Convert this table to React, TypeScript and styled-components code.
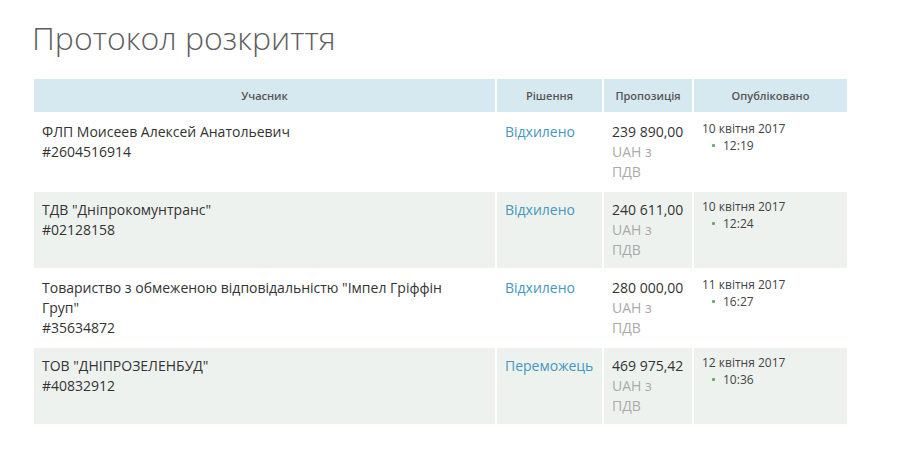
import React from "react";
import styled, { createGlobalStyle } from "styled-components";

const Global = createGlobalStyle`
  html, body { margin: 0; padding: 0; background: #fff; }
  body { font-family: "Open Sans", "Noto Sans", sans-serif; color: #333; }
`;

const Page = styled.div`
  padding: 14px 0 0 32px;
  width: 817px;
`;

const Title = styled.h1`
  margin: 0;
  font-family: "Open Sans", "Noto Sans", sans-serif;
  font-weight: 300;
  font-size: 32px;
  line-height: 48px;
  color: #5e5e5e;
`;

const Table = styled.table`
  margin-top: 15px;
  width: 817px;
  border-collapse: separate;
  border-spacing: 2px;
  table-layout: fixed;
`;

const HeadCell = styled.th<{ $w: number }>`
  width: ${(p) => p.$w}px;
  height: 33px;
  padding: 0;
  background: #d7e9f0;
  color: #555;
  font-size: 11px;
  font-weight: 600;
  text-align: center;
  vertical-align: middle;
`;

const Row = styled.tr<{ $alt: boolean }>`
  background: ${(p) => (p.$alt ? "#eef2ef" : "#fff")};
`;

const Cell = styled.td`
  padding: 8px 8px;
  vertical-align: top;
  font-size: 14px;
  line-height: 20px;
  color: #333;
  height: 60px;
`;

const Line = styled.div``;

const Status = styled.a`
  color: #4597c0;
  text-decoration: none;
`;

const Amount = styled.div`
  color: #333;
  white-space: nowrap;
`;

const Muted = styled.div`
  color: #aaa;
`;

const DateCell = styled.td`
  padding: 6px 8px;
  vertical-align: top;
  font-size: 12px;
  line-height: 17px;
  color: #444;
`;

const TimeList = styled.ul`
  margin: 0;
  padding: 0 0 0 10px;
  list-style: none;
`;

const TimeItem = styled.li`
  display: flex;
  align-items: center;
  gap: 8px;
  &::before {
    content: "";
    width: 3px;
    height: 3px;
    background: #6aa86a;
    border-radius: 1px;
  }
`;

const rows = [
  { name: ["ФЛП Моисеев Алексей Анатольевич"], id: "#2604516914", status: "Відхилено", amount: "239 890,00", date: "10 квітня 2017", time: "12:19" },
  { name: ['ТДВ "Дніпрокомунтранс"'], id: "#02128158", status: "Відхилено", amount: "240 611,00", date: "10 квітня 2017", time: "12:24" },
  { name: ['Товариство з обмеженою відповідальністю "Імпел Гріффін', 'Груп"'], id: "#35634872", status: "Відхилено", amount: "280 000,00", date: "11 квітня 2017", time: "16:27" },
  { name: ['ТОВ "ДНІПРОЗЕЛЕНБУД"'], id: "#40832912", status: "Переможець", amount: "469 975,42", date: "12 квітня 2017", time: "10:36" },
];

export default function App() {
  return (
    <>
      <Global />
      <Page>
        <Title>Протокол розкриття</Title>
        <Table>
          <thead>
            <tr>
              <HeadCell $w={461}>Учасник</HeadCell>
              <HeadCell $w={105}>Рішення</HeadCell>
              <HeadCell $w={88}>Пропозиція</HeadCell>
              <HeadCell $w={153}>Опубліковано</HeadCell>
            </tr>
          </thead>
          <tbody>
            {rows.map((r, i) => (
              <Row key={i} $alt={i % 2 === 1}>
                <Cell>
                  {r.name.map((n, j) => (
                    <Line key={j}>{n}</Line>
                  ))}
                  <Line>{r.id}</Line>
                </Cell>
                <Cell>
                  <Status href="#">{r.status}</Status>
                </Cell>
                <Cell>
                  <Amount>{r.amount}</Amount>
                  <Muted>UAH з</Muted>
                  <Muted>ПДВ</Muted>
                </Cell>
                <DateCell>
                  <div>{r.date}</div>
                  <TimeList>
                    <TimeItem>{r.time}</TimeItem>
                  </TimeList>
                </DateCell>
              </Row>
            ))}
          </tbody>
        </Table>
      </Page>
    </>
  );
}
